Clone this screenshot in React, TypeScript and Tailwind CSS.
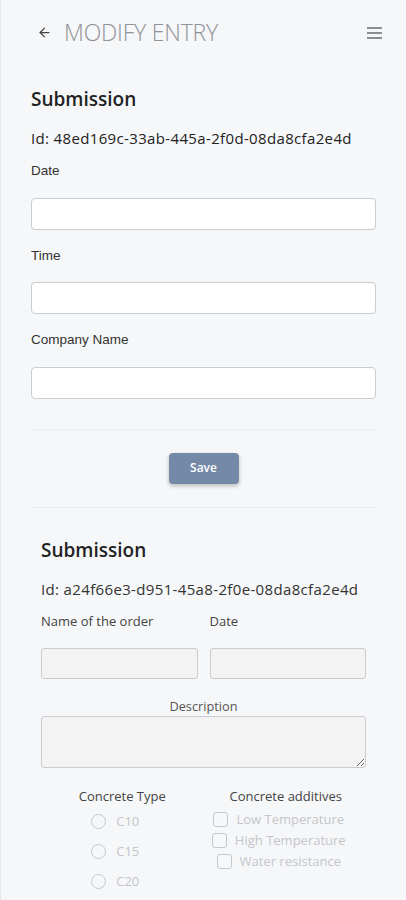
import { ArrowLeft } from 'lucide-react';

const sans = { fontFamily: '"Open Sans", "Noto Sans", sans-serif' };

function Field({ label }: { label: string }) {
  return (
    <div className="flex flex-col">
      <label className="text-[13.5px] text-[#333] font-['Liberation_Sans',sans-serif] leading-none pt-[2px]">{label}</label>
      <input className="mt-[20px] h-[32px] w-full rounded-[4px] border border-[#c9ccd1] bg-white" />
    </div>
  );
}

function Radio({ label }: { label: string }) {
  return (
    <div className="flex items-center gap-[10px] h-[30px]">
      <span className="w-[15px] h-[15px] rounded-full border border-[#c4c7cc]" />
      <span className="text-[13px] text-[#c4c6ca]">{label}</span>
    </div>
  );
}

function Check({ label }: { label: string }) {
  return (
    <div className="flex items-center gap-[8px] h-[21px]">
      <span className="w-[15px] h-[15px] rounded-[3px] border border-[#c4c7cc]" />
      <span className="text-[13px] text-[#c4c6ca]">{label}</span>
    </div>
  );
}

export default function App() {
  return (
    <div className="min-h-[900px] w-[406px] bg-[#f6f7f9] border-l border-[#e4e6e9] text-[#222]" style={sans}>
      {/* header */}
      <header className="flex items-center justify-between pl-[36px] pr-[24px] pt-[8px] h-[56px]">
        <div className="flex items-center gap-[12px]">
          <ArrowLeft className="w-[15px] h-[15px] text-[#444]" strokeWidth={2} />
          <span className="text-[23px] font-light text-[#8f9296] tracking-[-0.2px]">MODIFY ENTRY</span>
        </div>
        <div className="flex flex-col gap-[3px] w-[15px] mt-[2px]">
          <span className="h-[2px] bg-[#8a8d91]" />
          <span className="h-[2px] bg-[#8a8d91]" />
          <span className="h-[2px] bg-[#8a8d91]" />
        </div>
      </header>

      {/* first form */}
      <section className="px-[30px] pt-[34px]">
        <h2 className="text-[19px] font-semibold leading-none">Submission</h2>
        <p className="mt-[22px] text-[15px] tracking-[0.35px] leading-none">Id: 48ed169c-33ab-445a-2f0d-08da8cfa2e4d</p>
        <div className="mt-[16px] flex flex-col gap-[17px]">
          <Field label="Date" />
          <Field label="Time" />
          <Field label="Company Name" />
        </div>
        <div className="mt-[30px] border-t border-[#eceef1]" />
        <div className="flex justify-center pt-[23px] pb-[23px]">
          <button className="w-[70px] h-[31px] rounded-[4px] bg-[#7488a7] text-white text-[12px] font-semibold shadow-[0_2px_4px_rgba(0,0,0,0.25)]">
            Save
          </button>
        </div>
        <div className="border-t border-[#e8eaed]" />
      </section>

      {/* second form */}
      <section className="px-[40px] pt-[33px]">
        <h2 className="text-[19px] font-semibold leading-none">Submission</h2>
        <p className="mt-[22px] text-[15px] tracking-[0.35px] leading-none text-[#333]">Id: a24f66e3-d951-45a8-2f0e-08da8cfa2e4d</p>
        <div className="mt-[11px] grid grid-cols-2 gap-x-[12px]">
          <div>
            <label className="text-[13px] text-[#444] leading-none">Name of the order</label>
            <input disabled className="mt-[16px] block h-[31px] w-full rounded-[3px] border border-[#c9ccd1] bg-[#f3f3f3]" />
          </div>
          <div>
            <label className="text-[13px] text-[#444] leading-none">Date</label>
            <input disabled className="mt-[16px] block h-[31px] w-full rounded-[3px] border border-[#c9ccd1] bg-[#f3f3f3]" />
          </div>
        </div>
        <p className="mt-[21px] text-center text-[12.75px] text-[#555] leading-none">Description</p>
        <textarea disabled className="mt-[4px] block h-[52px] w-full rounded-[3px] border border-[#c9ccd1] bg-[#f3f3f3]" />
        <div className="mt-[22px] grid grid-cols-2">
          <div className="flex flex-col items-center">
            <p className="text-[13px] text-[#444] leading-none">Concrete Type</p>
            <div className="mt-[3px] -ml-[14px] flex flex-col">
              <Radio label="C10" />
              <Radio label="C15" />
              <Radio label="C20" />
            </div>
          </div>
          <div className="flex flex-col items-center">
            <p className="text-[13px] text-[#444] leading-none ml-[2px]">Concrete additives</p>
            <div className="mt-[6px] -ml-[12px] flex flex-col items-center">
              <Check label="Low Temperature" />
              <Check label="High Temperature" />
              <Check label="Water resistance" />
            </div>
          </div>
        </div>
      </section>
    </div>
  );
}
